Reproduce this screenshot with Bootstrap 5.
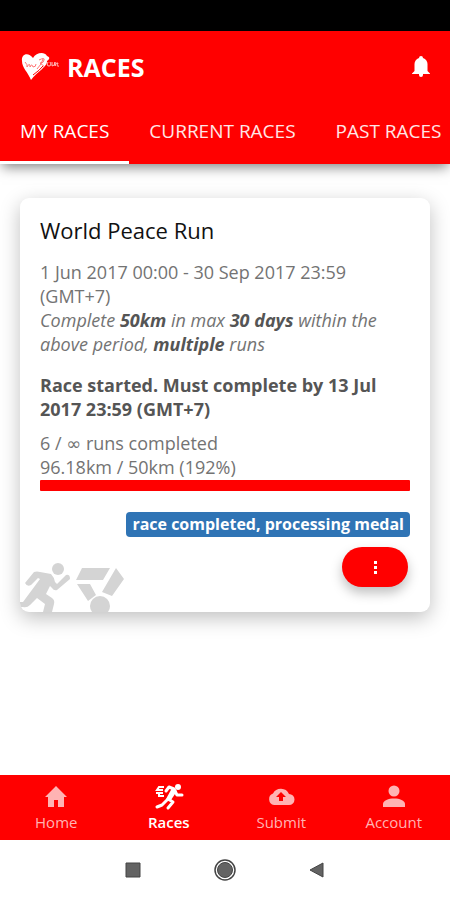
<!DOCTYPE html>
<html lang="en">
<head>
<meta charset="utf-8">
<meta name="viewport" content="width=device-width, initial-scale=1">
<title>Races</title>
<link rel="stylesheet" href="https://cdn.jsdelivr.net/npm/bootstrap@5.3.0/dist/css/bootstrap.min.css">
<style>
body { font-family: "Open Sans", sans-serif; font-size: 18px; line-height: 24px; color: #737373; background: #fff; }
.status-strip { height: 31px; background: #000; }
.app-header { background: #f00; color: #fff; box-shadow: 0 5px 12px -2px rgba(0,0,0,.5); }
.title-bar { height: 72px; padding: 0 20px; }
.title-bar h1 { font-size: 25px; line-height: 32px; font-weight: 700; }
.logo-heart { width: 39px; height: 36px; }
.race-tabs { overflow: hidden; }
.race-tabs .nav-link { padding: 16px 20px 18px; font-size: 19px; line-height: 24px; color: #ffe6e6; border-bottom: 3px solid transparent; white-space: nowrap; }
.race-tabs .nav-link.active { color: #fff; border-color: #fff; }
.page-body { padding: 34px 20px; }
.race-card { border: 0; border-radius: 9px; box-shadow: 0 6px 20px rgba(0,0,0,.25); overflow: hidden; }
.race-card .card-body { padding: 18px 20px 0; }
.race-card h2 { font-size: 22px; line-height: 28px; font-weight: 400; color: #111; margin: 0 0 16px; }
.race-card p { margin-bottom: 17px; }
.race-card strong { color: #555; font-weight: 700; }
.race-card .deadline { margin-bottom: 10px; }
.race-card .tally { margin-bottom: 1px; }
.infinity { font-family: "DejaVu Sans", sans-serif; line-height: 1; }
.race-card .progress { height: 11px; border-radius: 1px; background: #eee; }
.race-card .progress-bar { background: #f00; }
.state-row { margin-top: 21px; }
.race-state { background: #2f74b5; font-size: 16px; line-height: 17px; padding: 4px 6px; border-radius: 4px; }
.card-actions { padding: 10px 20px 0 0; }
.more-btn { width: 66px; height: 40px; border-radius: 20px; background: #f00; box-shadow: 0 6px 12px rgba(0,0,0,.25); margin: 0 2px 25px 0; }
.more-btn:hover { background: #d00; }
.medals { width: 105px; height: 50px; fill: #d4d4d4; }
.tab-bar { background: #f00; height: 65px; }
.tab-bar a { color: #ffb3b3; font-size: 15px; line-height: 20px; padding-top: 9px; }
.tab-bar a.active { color: #fff; font-weight: 600; }
.tab-bar svg { width: 32px; height: 28px; fill: currentColor; }
.system-keys { height: 60px; }
.system-keys .btn { margin: 0 34px; }
</style>
</head>
<body>
<div class="d-flex flex-column min-vh-100 overflow-hidden">
  <div class="status-strip"></div>
  <header class="app-header">
    <div class="title-bar d-flex align-items-center">
      <svg class="logo-heart" viewBox="0 0 39 36" aria-hidden="true">
        <path fill="#fff" d="M11 31C8 23 2 19 2 12C1 4 9 3 13 9C16 4 24 2 27 7C30 8 30 10 27 12C28 17 17 23 11 31Z"/>
        <path fill="none" stroke="#f77" stroke-width="1" d="M5 13q3 3 2 5q2-4 3-2v2q2-4 3 0q3 0 3-3M17 20Q22 15 23 10M19 11q6-3 5 0q0 3-4 3l5 4"/>
        <path fill="none" stroke="#f00" stroke-width="1" d="M13 26Q20 21 23 17"/>
        <path fill="none" stroke="#ffc0c0" stroke-width="1" d="M28 13q-2 4 1 4t1-4m2 0v4q3 0 3-4v4q1-4 3-3m0 0q-2 4 1 3"/>
      </svg>
      <h1 class="mb-0 ms-2">RACES</h1>
      <button class="btn p-0 border-0 ms-auto d-flex" type="button" aria-label="Notifications">
        <svg width="18" height="22" viewBox="0 0 18 22" fill="#fff"><path d="M9 0a2 2 0 0 1 2 2C14 3 15.500 5.500 15.500 8v7l2.500 2.500v.5H0v-.5L2.500 15V8c0-2.500 1.500-5 4.500-6a2 2 0 0 1 2-2ZM7 18h4v1a2 2 0 0 1-4 0Z"/></svg>
      </button>
    </div>
    <nav class="race-tabs nav flex-nowrap" aria-label="Race lists">
      <a class="nav-link active" aria-current="page" href="#mine">MY RACES</a>
      <a class="nav-link" href="#current">CURRENT RACES</a>
      <a class="nav-link" href="#past">PAST RACES</a>
    </nav>
  </header>
  <main class="page-body flex-grow-1">
    <article class="race-card card">
      <div class="card-body">
        <h2>World Peace Run</h2>
        <p>1 Jun 2017 00:00 - 30 Sep 2017 23:59 (GMT+7)<br><em>Complete <strong>50km</strong> in max <strong>30 days</strong> within the above period, <strong>multiple</strong> runs</em></p>
        <p class="deadline"><strong>Race started. Must complete by 13 Jul 2017 23:59 (GMT+7)</strong></p>
        <p class="tally">6 / <span class="infinity">∞</span> runs completed<br>96.18km / 50km (192%)</p>
        <div class="progress" role="progressbar" aria-label="Distance completed" aria-valuenow="100" aria-valuemin="0" aria-valuemax="100"><div class="progress-bar w-100"></div></div>
        <div class="state-row d-flex justify-content-end"><span class="race-state badge">race completed, processing medal</span></div>
      </div>
      <div class="card-actions d-flex justify-content-between align-items-end">
        <svg class="medals" viewBox="0 0 105 50" aria-hidden="true">
          <circle cx="38" cy="7" r="6"/>
          <path d="M14 10Q17 9 20 10L31 12Q34 15 35 20L37 22L46 13Q50 12 50 17L37 28Q34 29 32 26L30 24L26 32L32 36Q35 38 34 42L32 50H23L25 42L17 36L10 43Q7 46 3 45H0V40H3L20 17L18 16L11 23Q7 25 5 21Z"/>
          <path d="M62 6H90L83 18H56ZM96 6L104 17L92 34L82 30ZM57 22H70L76 33L68 39Z"/>
          <circle cx="80" cy="44" r="10"/>
        </svg>
        <button class="more-btn btn border-0 p-0 d-flex align-items-center justify-content-center" type="button" aria-label="More options">
          <svg width="3" height="13" viewBox="0 0 3 13" fill="#fff"><path d="M0 0h3v3H0zM0 5h3v3H0zM0 10h3v3H0z"/></svg>
        </button>
      </div>
    </article>
  </main>
  <nav class="tab-bar d-flex" aria-label="Main">
    <a class="col text-center text-decoration-none d-flex flex-column align-items-center" href="#home">
      <svg viewBox="0 0 32 28"><path d="M16 2L27 13H24V23H18V16H14V23H8V13H5Z"/></svg>Home</a>
    <a class="active col text-center text-decoration-none d-flex flex-column align-items-center" aria-current="page" href="#races">
      <svg viewBox="0 0 32 28"><circle cx="25" cy="3" r="3"/><path fill="none" stroke="currentColor" stroke-width="3" stroke-linejoin="round" stroke-linecap="round" d="M13 7L16 3L21 5L24 11H29M14 16L9 21L4 23M15 15L20 18L15 24"/><path d="M19 4L24 7L18 16L13 15Z"/><path fill="none" stroke="currentColor" stroke-width="2" d="M11 3H6L4 6H10M3 9H10M6 9V12H11"/></svg>Races</a>
    <a class="col text-center text-decoration-none d-flex flex-column align-items-center" href="#submit">
      <svg viewBox="0 0 32 28"><path fill-rule="evenodd" d="M9 21A6 6 0 0 1 8 9.500A9 9 0 0 1 24 10A5.500 5.500 0 0 1 24 21ZM14 17H18V13H21L16 8L11 13H14Z"/></svg>Submit</a>
    <a class="col text-center text-decoration-none d-flex flex-column align-items-center" href="#account">
      <svg viewBox="0 0 32 28"><circle cx="16" cy="7" r="5.500"/><path d="M5 23V20C5 12.500 27 12.500 27 20V23Z"/></svg>Account</a>
  </nav>
  <div class="system-keys d-flex align-items-center justify-content-center">
    <button class="btn p-0 border-0 d-flex" type="button" aria-label="Recent apps"><svg width="24" height="24" viewBox="0 0 24 24"><path fill="#636363" stroke="#444" d="M5 5H19V19H5Z"/></svg></button>
    <button class="btn p-0 border-0 d-flex" type="button" aria-label="Home screen"><svg width="24" height="24" viewBox="0 0 24 24"><circle cx="12" cy="12" r="10" fill="#fff" stroke="#444" stroke-width="1.500"/><circle cx="12" cy="12" r="7.500" fill="#636363" stroke="#444"/></svg></button>
    <button class="btn p-0 border-0 d-flex" type="button" aria-label="Back"><svg width="24" height="24" viewBox="0 0 24 24"><path fill="#636363" stroke="#444" d="M5 12L18 5V19Z"/></svg></button>
  </div>
</div>
<script src="https://cdn.jsdelivr.net/npm/bootstrap@5.3.0/dist/js/bootstrap.bundle.min.js"></script>
</body>
</html>
